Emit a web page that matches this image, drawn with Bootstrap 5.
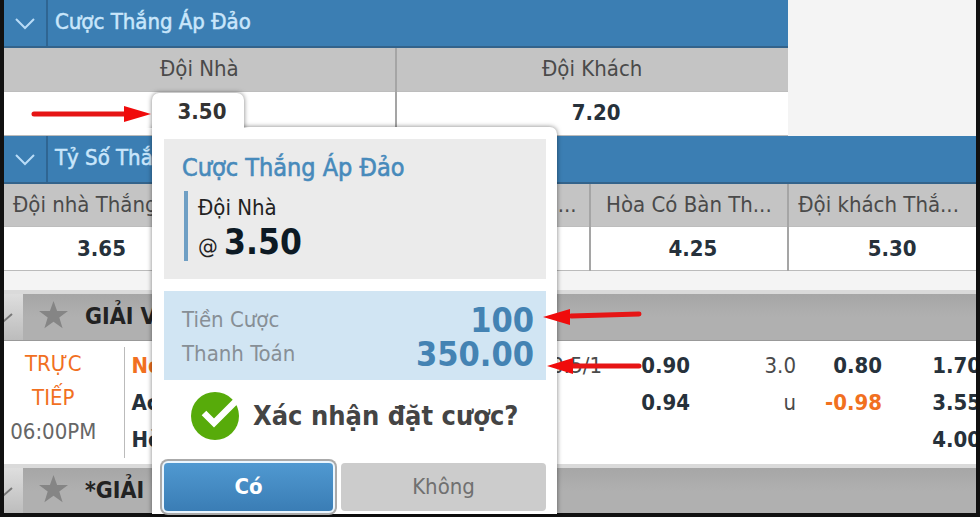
<!DOCTYPE html>
<html lang="vi">
<head>
<meta charset="utf-8">
<meta name="viewport" content="width=device-width, initial-scale=1">
<title>Cược Thắng Áp Đảo</title>
<link href="https://cdn.jsdelivr.net/npm/bootstrap@5.3.0/dist/css/bootstrap.min.css" rel="stylesheet">
<style>
body { font-family: "DejaVu Sans Condensed", "Noto Sans", sans-serif; font-size: 22px; line-height: 34px; color: #4a4a4a; background: #111; height: 100vh; overflow: hidden; }
.stage { background: #f4f4f4; margin: 0 4px; height: calc(100vh - 4px); }
.half { width: calc(80% + 6px); }
.bleed { margin-right: -11px; }
.band { background: #3b7eb3; color: #c9e6fb; border-bottom: 2px solid #33638b; height: 48px; margin: 0; }
.band-toggle { width: 44px; border: 0; border-right: 2px solid #2f6592; background: none; padding: 0; color: #b9dcf7; }
.band-name { padding-left: 7px; font-size: 22px; line-height: 44px; font-weight: 400; margin: 0; -webkit-text-stroke: 0.5px #c9e6fb; }
.odds { width: 100%; table-layout: fixed; margin: 0; }
.odds th { height: 43px; background: #c4c4c4; font-weight: 400; text-align: center; padding: 0; border-bottom: 1px solid #bdbdbd; white-space: nowrap; overflow: hidden; }
.odds td { height: 44px; background: #fff; font-weight: 700; color: #26313b; font-size: 22px; text-align: center; padding: 0 0 0 8px; border-bottom: 1px solid #bbb; }
.odds th + th, .odds td + td { border-left: 2px solid #a5a5a5; }
.odds .start { text-align: left; padding-left: 9px; }
.odds .finish { text-align: right; padding-right: 12px; }
.first { width: 188px; }
.gap-strip { height: 19px; }
.league { height: 51px; border-top: 4px solid #dadada; border-bottom: 1px solid #999; background: linear-gradient(#a6a6a6, #b0b0b0 50%); }
.league-toggle { width: 19px; border: 0; padding: 0; background: linear-gradient(#dedede, #bcbcbc); color: #777; overflow: hidden; text-align: left; }
.league-star { border: 0; background: none; padding: 0 17px 4px 16px; line-height: 0; }
.league-name { font-size: 23px; font-weight: 700; color: #222; margin: 0; }
.match { width: 100%; table-layout: fixed; background: #fff; }
.match td { padding: 0; line-height: 37px; vertical-align: top; white-space: nowrap; text-align: right; }
.match tbody::before, .match tbody::after { content: ""; display: table-row; height: 6px; }
.match .kickoff { border-right: 1px solid #bbb; text-align: center; line-height: 34px; color: #666; padding-right: 21px; }
.match .team { text-align: left; padding-left: 7px; }
.match .price, .match .team { font-weight: 700; font-size: 22px; color: #26313b; }
.match .hot, .hot { color: #f1701f !important; }
.slip { position: absolute; left: 152px; top: 127px; width: 405px; padding: 12px 11px 3px 12px; background: #fff; border-radius: 0 7px 0 0; box-shadow: 0 0 5px rgba(0,0,0,.5); }
.slip-tab { position: absolute; left: 0; top: -34px; width: 92px; height: 42px; border-radius: 7px 7px 0 0; background: #fff; color: #333; font-weight: 700; font-size: 22px; line-height: 38px; padding-left: 8px; text-align: center; box-shadow: 0 0 5px rgba(0,0,0,.5); clip-path: inset(-6px -6px 7px -6px); }
.pick { background: #ebebeb; height: 140px; padding: 12px 18px; }
.pick h2 { font-size: 25px; line-height: 34px; margin: 0 0 6px; color: #478abb; font-weight: 400; -webkit-text-stroke: 0.6px #478abb; }
.pick-line { border-left: 4px solid #6f9fc4; padding-left: 10px; margin-left: 2px; color: #222; height: 70px; }
.pick-line strong { font-size: 35px; color: #0d1a24; }
.stake { background: #d1e5f3; margin-top: 12px; height: 89px; padding: 12px 12px 0 18px; color: #878f96; }
.stake strong { font-size: 34px; color: #4483b3; }
.confirm { height: 83px; padding: 0 0 12px 26px; font-size: 27px; font-weight: 700; color: #444; }
.confirm svg { margin-right: 13px; }
.slip .choice { height: 48px; padding: 0; font-size: 22px; line-height: 1; border: 0; border-radius: 4px; }
.choice-yes { width: 169px; color: #fff; font-weight: 700; background: linear-gradient(#5099d1, #3a7db5); box-shadow: 0 0 0 2px #eaf6ff, 0 0 0 4px #aaa; }
.choice-yes:hover { color: #fff; }
.choice-no { background: #ccc; color: #707070; }
.pointers { position: absolute; left: 0; top: 0; pointer-events: none; }
</style>
</head>
<body>
<main class="stage overflow-hidden">
  <section class="half">
    <header class="band d-flex">
      <button class="band-toggle" type="button" aria-label="Thu gọn"><svg width="22" height="12" viewBox="0 0 22 12" fill="none" stroke="currentColor" stroke-width="2"><path d="M2 1l9 9 9-9"/></svg></button>
      <h2 class="band-name">Cược Thắng Áp Đảo</h2>
    </header>
    <table class="odds">
      <thead><tr><th>Đội Nhà</th><th>Đội Khách</th></tr></thead>
      <tbody><tr><td></td><td>7.20</td></tr></tbody>
    </table>
  </section>
  <section class="bleed">
    <header class="band d-flex">
      <button class="band-toggle" type="button" aria-label="Thu gọn"><svg width="22" height="12" viewBox="0 0 22 12" fill="none" stroke="currentColor" stroke-width="2"><path d="M2 1l9 9 9-9"/></svg></button>
      <h2 class="band-name">Tỷ Số Thắng</h2>
    </header>
    <table class="odds">
      <colgroup><col class="first"><col><col><col><col></colgroup>
      <thead><tr><th class="start">Đội nhà Thắng</th><th></th><th class="finish">...</th><th class="finish px-0 text-center">Hòa Có Bàn Th...</th><th class="start">Đội khách Thắ...</th></tr></thead>
      <tbody><tr><td>3.65</td><td></td><td></td><td>4.25</td><td>5.30</td></tr></tbody>
    </table>
  </section>
  <div class="gap-strip"></div>
  <section>
    <header class="league d-flex align-items-stretch">
      <button class="league-toggle" type="button" aria-label="Thu gọn"><svg width="12" height="12" viewBox="0 0 12 12" fill="none" stroke="currentColor" stroke-width="2"><path d="M-6 2l6 7 8-7"/></svg></button>
      <button class="league-star" type="button" aria-label="Yêu thích"><svg width="29" height="28" viewBox="0 0 29 28" fill="#858585"><path d="M14.500 0l3.600 10h10.900l-8.700 6.500 3.300 10.800-9.100-6.500-9.100 6.500 3.300-10.800L0 10h10.900z"/></svg></button>
      <h3 class="league-name align-self-center">GIẢI VÔ</h3>
    </header>
    <table class="match">
      <colgroup><col width="120"><col width="355"><col width="123"><col width="88"><col width="106"><col width="86"><col width="99"></colgroup>
      <tbody>
        <tr><td class="kickoff" rowspan="3"><span class="hot">TRỰC<br>TIẾP</span><br>06:00PM</td><td class="team hot">No</td><td>0.5/1</td><td class="price">0.90</td><td>3.0</td><td class="price">0.80</td><td class="price">1.70</td></tr>
        <tr><td class="team">Ac</td><td></td><td class="price">0.94</td><td>u</td><td class="price hot">-0.98</td><td class="price">3.55</td></tr>
        <tr><td class="team">Hòa</td><td></td><td></td><td></td><td></td><td class="price">4.00</td></tr>
      </tbody>
    </table>
    <header class="league d-flex align-items-stretch">
      <button class="league-toggle" type="button" aria-label="Thu gọn"><svg width="12" height="12" viewBox="0 0 12 12" fill="none" stroke="currentColor" stroke-width="2"><path d="M-6 2l6 7 8-7"/></svg></button>
      <button class="league-star" type="button" aria-label="Yêu thích"><svg width="29" height="28" viewBox="0 0 29 28" fill="#858585"><path d="M14.500 0l3.600 10h10.900l-8.700 6.500 3.300 10.800-9.100-6.500-9.100 6.500 3.300-10.800L0 10h10.900z"/></svg></button>
      <h3 class="league-name align-self-center">*GIẢI</h3>
    </header>
  </section>
</main>

<aside class="slip">
  <div class="slip-tab">3.50</div>
  <div class="pick">
    <h2>Cược Thắng Áp Đảo</h2>
    <div class="pick-line">Đội Nhà<br>@ <strong>3.50</strong></div>
  </div>
  <div class="stake">
    <div class="d-flex justify-content-between"><span>Tiền Cược</span><strong>100</strong></div>
    <div class="d-flex justify-content-between"><span>Thanh Toán</span><strong>350.00</strong></div>
  </div>
  <div class="confirm d-flex align-items-center">
    <svg width="50" height="50" viewBox="0 0 50 50"><circle cx="25" cy="25" r="24" fill="#57ab0a"/><path d="M14 22l10 10L46 10" fill="none" stroke="#fff" stroke-width="6.500"/></svg>
    <span>Xác nhận đặt cược?</span>
  </div>
  <div class="d-flex gap-2">
    <button class="btn choice choice-yes" type="button">Có</button>
    <button class="btn choice choice-no flex-fill" type="button">Không</button>
  </div>
</aside>

<svg class="pointers" width="660" height="400" viewBox="0 0 660 400" fill="#f00b0b" stroke="#e61515" stroke-linecap="round" aria-hidden="true">
  <path d="M34 114H126M639 314l-68 2M639 366h-68" stroke-width="5" fill="none"/>
  <path d="M151 114l-27-8v16zM543 317l27-8v16zM547 366l26-8v16z" stroke="none"/>
</svg>
<script src="https://cdn.jsdelivr.net/npm/bootstrap@5.3.0/dist/js/bootstrap.bundle.min.js"></script>
</body>
</html>
